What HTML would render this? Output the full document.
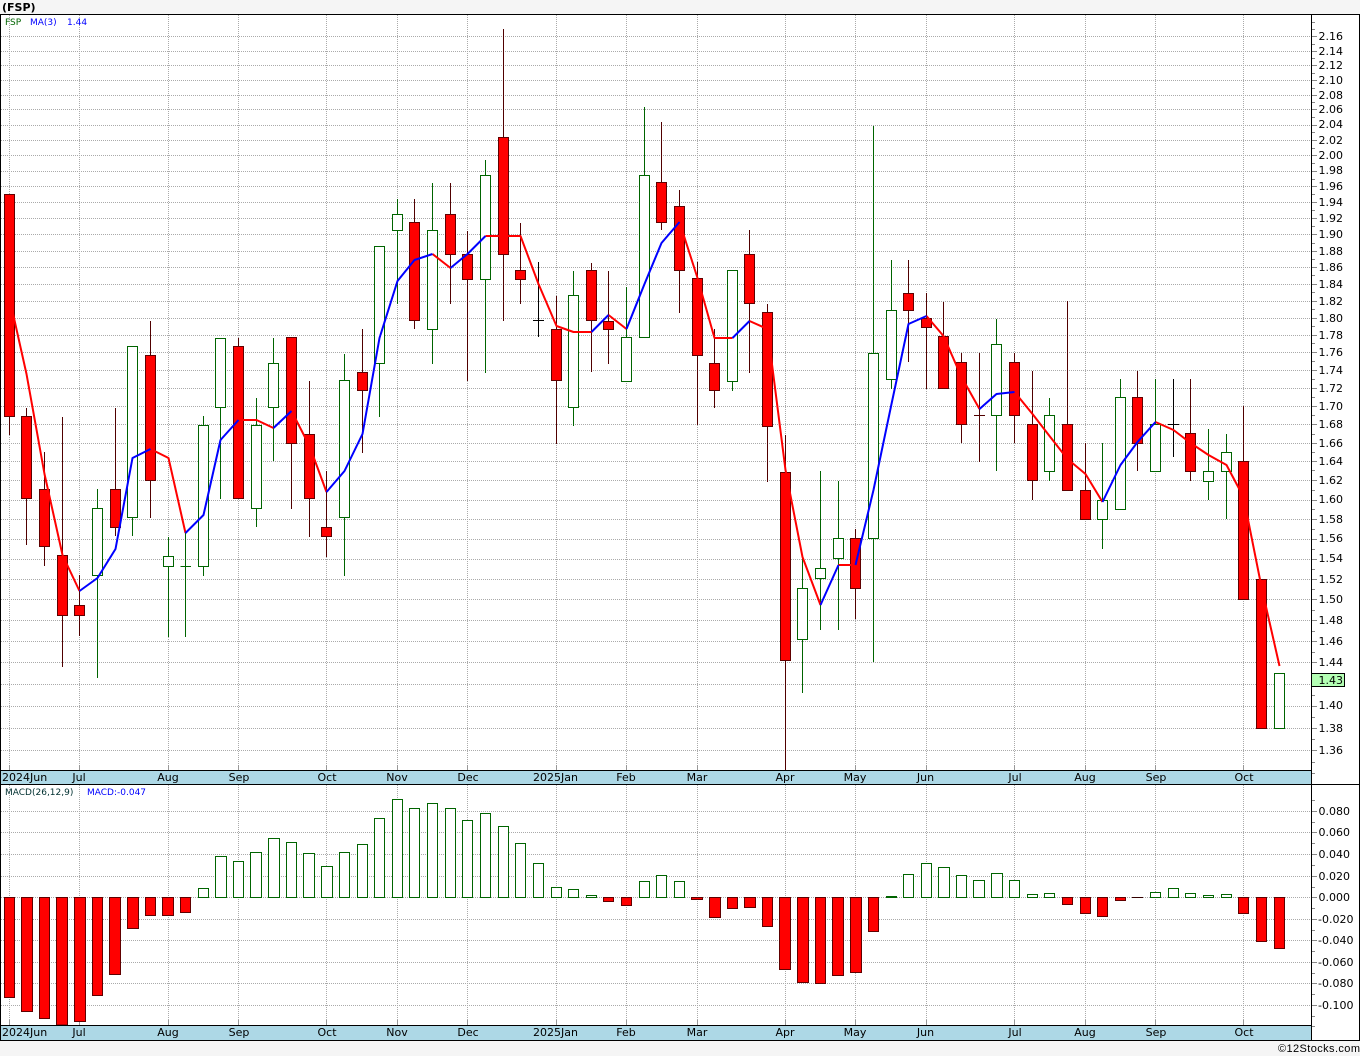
<!DOCTYPE html>
<html lang="en">
<head>
<meta charset="utf-8">
<title>FSP</title>
<style>
html,body{margin:0;padding:0;background:#f5f5f5;width:1360px;height:1056px;overflow:hidden}
svg{display:block}
text{font-family:"DejaVu Sans",sans-serif;font-size:11px;fill:#000}
.s{font-size:9px}
.a text{text-anchor:middle}
</style>
</head>
<body>
<svg xmlns="http://www.w3.org/2000/svg" width="1360" height="1056" viewBox="0 0 1360 1056">
<rect x="0" y="0" width="1360" height="1056" fill="#f5f5f5"/>
<rect x="0" y="14" width="1360" height="1027" fill="#fff"/>
<rect x="0" y="770" width="1311" height="14" fill="#add8e6"/>
<rect x="0" y="1025" width="1311" height="15" fill="#add8e6"/>

<!-- grid -->
<path fill="none" stroke="#aaa" stroke-width="1" stroke-dasharray="1 1" d="M1 36.5H1311M1 51.5H1311M1 65.5H1311M1 80.5H1311M1 95.5H1311M1 109.5H1311M1 125.5H1311M1 140.5H1311M1 155.5H1311M1 171.5H1311M1 186.5H1311M1 202.5H1311M1 218.5H1311M1 234.5H1311M1 251.5H1311M1 267.5H1311M1 284.5H1311M1 301.5H1311M1 318.5H1311M1 335.5H1311M1 352.5H1311M1 370.5H1311M1 388.5H1311M1 406.5H1311M1 424.5H1311M1 443.5H1311M1 461.5H1311M1 480.5H1311M1 500.5H1311M1 519.5H1311M1 539.5H1311M1 559.5H1311M1 579.5H1311M1 599.5H1311M1 620.5H1311M1 641.5H1311M1 662.5H1311M1 684.5H1311M1 706.5H1311M1 728.5H1311M1 750.5H1311
M9.5 15V770M79.5 15V770M168.5 15V770M238.5 15V770M326.5 15V770M397.5 15V770M467.5 15V770M556.5 15V770M626.5 15V770M697.5 15V770M785.5 15V770M855.5 15V770M926.5 15V770M1014.5 15V770M1085.5 15V770M1155.5 15V770M1243.5 15V770
M1 811.5H1311M1 832.5H1311M1 854.5H1311M1 876.5H1311M1 897.5H1311M1 919.5H1311M1 940.5H1311M1 962.5H1311M1 983.5H1311M1 1005.5H1311
M9.5 785V1025M79.5 785V1025M168.5 785V1025M238.5 785V1025M326.5 785V1025M397.5 785V1025M467.5 785V1025M556.5 785V1025M626.5 785V1025M697.5 785V1025M785.5 785V1025M855.5 785V1025M926.5 785V1025M1014.5 785V1025M1085.5 785V1025M1155.5 785V1025M1243.5 785V1025"/>
<path fill="none" stroke="#999" d="M9.5 765V770M79.5 765V770M168.5 765V770M238.5 765V770M326.5 765V770M397.5 765V770M467.5 765V770M556.5 765V770M626.5 765V770M697.5 765V770M785.5 765V770M855.5 765V770M926.5 765V770M1014.5 765V770M1085.5 765V770M1155.5 765V770M1243.5 765V770
M9.5 1020V1025M79.5 1020V1025M168.5 1020V1025M238.5 1020V1025M326.5 1020V1025M397.5 1020V1025M467.5 1020V1025M556.5 1020V1025M626.5 1020V1025M697.5 1020V1025M785.5 1020V1025M855.5 1020V1025M926.5 1020V1025M1014.5 1020V1025M1085.5 1020V1025M1155.5 1020V1025M1243.5 1020V1025"/>

<!-- axis ticks -->
<path fill="none" stroke="#888" d="M1312 36.5h5M1312 51.5h5M1312 65.5h5M1312 80.5h5M1312 95.5h5M1312 109.5h5M1312 125.5h5M1312 140.5h5M1312 155.5h5M1312 171.5h5M1312 186.5h5M1312 202.5h5M1312 218.5h5M1312 234.5h5M1312 251.5h5M1312 267.5h5M1312 284.5h5M1312 301.5h5M1312 318.5h5M1312 335.5h5M1312 352.5h5M1312 370.5h5M1312 388.5h5M1312 406.5h5M1312 424.5h5M1312 443.5h5M1312 461.5h5M1312 480.5h5M1312 500.5h5M1312 519.5h5M1312 539.5h5M1312 559.5h5M1312 579.5h5M1312 599.5h5M1312 620.5h5M1312 641.5h5M1312 662.5h5M1312 684.5h5M1312 706.5h5M1312 728.5h5M1312 750.5h5
M1312 22.5h3M1312 29.5h3M1312 44.5h3M1312 58.5h3M1312 73.5h3M1312 88.5h3M1312 102.5h3M1312 117.5h3M1312 132.5h3M1312 148.5h3M1312 163.5h3M1312 179.5h3M1312 194.5h3M1312 210.5h3M1312 226.5h3M1312 243.5h3M1312 259.5h3M1312 275.5h3M1312 292.5h3M1312 309.5h3M1312 326.5h3M1312 343.5h3M1312 361.5h3M1312 379.5h3M1312 397.5h3M1312 415.5h3M1312 434.5h3M1312 452.5h3M1312 470.5h3M1312 490.5h3M1312 509.5h3M1312 529.5h3M1312 549.5h3M1312 569.5h3M1312 589.5h3M1312 610.5h3M1312 631.5h3M1312 652.5h3M1312 673.5h3M1312 695.5h3M1312 717.5h3M1312 739.5h3M1312 762.5h3M1312 773.5h3
M1312 811.5h5M1312 832.5h5M1312 854.5h5M1312 876.5h5M1312 897.5h5M1312 919.5h5M1312 940.5h5M1312 962.5h5M1312 983.5h5M1312 1005.5h5
M1312 800.5h3M1312 822.5h3M1312 843.5h3M1312 865.5h3M1312 887.5h3M1312 908.5h3M1312 930.5h3M1312 951.5h3M1312 973.5h3M1312 994.5h3M1312 1016.5h3M1312 1026.5h3"/>

<!-- green wicks -->
<path fill="none" stroke="#006400" d="M97.5 489V678M132.5 346V536M168.5 537V637M185.5 533V637M180.5 566.5H191M203.5 416V576M220.5 338V499M256.5 398V527M273.5 338V461M344.5 354V576M379.5 246V417M397.5 199V304M432.5 183V364M485.5 160V373M573.5 271V426M626.5 287V381M644.5 107V337M732.5 270V391M802.5 558V693M820.5 471V630M838.5 481V630M873.5 126V662M891.5 260V389M996.5 319V471M1049.5 398V481M1102.5 443V549M1120.5 379V509M1155.5 379V471M1208.5 429V500M1226.5 434V519M1279.5 673V728"/>
<!-- red wicks -->
<path fill="none" stroke="#500000" d="M9.5 194V435M26.5 408V545M44.5 452V566M62.5 417V667M79.5 575V636M115.5 408V536M150.5 321V518M238.5 338V498M291.5 337V509M309.5 381V537M326.5 471V557M362.5 329V453M414.5 199V329M450.5 183V304M467.5 231V381M503.5 29V321M520.5 223V304M556.5 296V444M591.5 263V372M608.5 271V364M661.5 122V230M679.5 190V313M697.5 262V425M714.5 329V408M749.5 230V373M767.5 304V482M785.5 435V770M855.5 529V619M908.5 260V362M926.5 293V389M943.5 302V389M961.5 353V443M979.5 353V462M974 415.5H985M1014.5 353V443M1032.5 371V500M1067.5 301V490M1085.5 443V519M1137.5 371V471M1190.5 379V481M1243.5 406V599M1261.5 579V728"/>
<!-- black doji -->
<path fill="none" stroke="#000" d="M538.5 262V337M533 320.5H544M1173.5 379V457M1168 424.5H1179"/>

<!-- green bodies -->
<path fill="#fff" stroke="#006400" d="M92.5 508.5h10V575.5h-10zM127.5 346.5h10V517.5h-10zM163.5 556.5h10V566.5h-10zM198.5 425.5h10V566.5h-10zM215.5 338.5h10V407.5h-10zM251.5 425.5h10V508.5h-10zM268.5 363.5h10V407.5h-10zM339.5 380.5h10V517.5h-10zM374.5 246.5h10V363.5h-10zM392.5 214.5h10V230.5h-10zM427.5 230.5h10V329.5h-10zM480.5 175.5h10V279.5h-10zM568.5 295.5h10V407.5h-10zM621.5 337.5h10V381.5h-10zM639.5 175.5h10V337.5h-10zM727.5 270.5h10V381.5h-10zM797.5 588.5h10V639.5h-10zM815.5 568.5h10V578.5h-10zM833.5 538.5h10V558.5h-10zM868.5 353.5h10V538.5h-10zM886.5 310.5h10V379.5h-10zM991.5 344.5h10V415.5h-10zM1044.5 415.5h10V471.5h-10zM1097.5 500.5h10V519.5h-10zM1115.5 397.5h10V509.5h-10zM1150.5 424.5h10V471.5h-10zM1203.5 471.5h10V481.5h-10zM1221.5 452.5h10V471.5h-10zM1274.5 673.5h10V728.5h-10z"/>
<!-- red bodies -->
<path fill="#f00" stroke="#600000" d="M4.5 194.5h10V416.5h-10zM21.5 416.5h10V498.5h-10zM39.5 489.5h10V546.5h-10zM57.5 555.5h10V615.5h-10zM74.5 605.5h10V615.5h-10zM110.5 489.5h10V527.5h-10zM145.5 355.5h10V480.5h-10zM233.5 346.5h10V498.5h-10zM286.5 337.5h10V443.5h-10zM304.5 434.5h10V498.5h-10zM321.5 527.5h10V536.5h-10zM357.5 372.5h10V390.5h-10zM409.5 222.5h10V320.5h-10zM445.5 214.5h10V254.5h-10zM462.5 254.5h10V279.5h-10zM498.5 137.5h10V254.5h-10zM515.5 270.5h10V279.5h-10zM551.5 329.5h10V380.5h-10zM586.5 270.5h10V320.5h-10zM603.5 321.5h10V329.5h-10zM656.5 182.5h10V222.5h-10zM674.5 206.5h10V270.5h-10zM692.5 278.5h10V355.5h-10zM709.5 363.5h10V390.5h-10zM744.5 254.5h10V303.5h-10zM762.5 312.5h10V426.5h-10zM780.5 472.5h10V660.5h-10zM850.5 538.5h10V588.5h-10zM903.5 293.5h10V310.5h-10zM921.5 318.5h10V327.5h-10zM938.5 336.5h10V388.5h-10zM956.5 362.5h10V424.5h-10zM1009.5 362.5h10V415.5h-10zM1027.5 424.5h10V480.5h-10zM1062.5 424.5h10V490.5h-10zM1080.5 490.5h10V519.5h-10zM1132.5 397.5h10V443.5h-10zM1185.5 433.5h10V471.5h-10zM1238.5 461.5h10V599.5h-10zM1256.5 579.5h10V728.5h-10z"/>

<!-- moving average -->
<path fill="none" stroke="#f00" stroke-width="2" stroke-linejoin="round" d="M9.5 298L26.5 374 44.5 474 62.5 555 79.5 591M150.5 449L168.5 458 185.5 533M238.5 420L256.5 420 273.5 428M291.5 411L309.5 446 326.5 492M432.5 254L450.5 268M485.5 236L503.5 236 520.5 236 538.5 284 556.5 326 573.5 332 591.5 332M608.5 315L626.5 329M679.5 222L697.5 278 714.5 338 732.5 338M749.5 321L767.5 329 785.5 470 802.5 557 820.5 605M838.5 565L855.5 565M926.5 316L943.5 336 961.5 377 979.5 409M1014.5 392L1032.5 414 1049.5 436 1067.5 459 1085.5 474 1102.5 502M1155.5 422L1173.5 430 1190.5 443 1208.5 455 1226.5 465 1243.5 497 1261.5 587 1279.5 666"/>
<path fill="none" stroke="#00f" stroke-width="2" stroke-linejoin="round" d="M79.5 591L97.5 578 115.5 549 132.5 458 150.5 449M185.5 533L203.5 515 220.5 440 238.5 420M273.5 428L291.5 411M326.5 492L344.5 471 362.5 434 379.5 338 397.5 281 414.5 260 432.5 254M450.5 268L467.5 254 485.5 236M591.5 332L608.5 315M626.5 329L644.5 284 661.5 243 679.5 222M732.5 338L749.5 321M820.5 605L838.5 565M855.5 565L873.5 490 891.5 404 908.5 324 926.5 316M979.5 409L996.5 394 1014.5 392M1102.5 502L1120.5 465 1137.5 442 1155.5 422"/>

<!-- MACD bars -->
<path fill="#fff" stroke="#006400" d="M198.5 888.5h10V897.5h-10zM215.5 856.5h11V897.5h-11zM233.5 861.5h10V897.5h-10zM250.5 852.5h11V897.5h-11zM268.5 838.5h11V897.5h-11zM286.5 842.5h10V897.5h-10zM303.5 853.5h11V897.5h-11zM321.5 866.5h11V897.5h-11zM339.5 852.5h10V897.5h-10zM357.5 844.5h10V897.5h-10zM374.5 818.5h10V897.5h-10zM392.5 799.5h10V897.5h-10zM409.5 808.5h10V897.5h-10zM427.5 803.5h10V897.5h-10zM445.5 808.5h10V897.5h-10zM462.5 820.5h10V897.5h-10zM480.5 813.5h10V897.5h-10zM498.5 826.5h10V897.5h-10zM515.5 843.5h10V897.5h-10zM533.5 863.5h10V897.5h-10zM551.5 887.5h10V897.5h-10zM568.5 889.5h10V897.5h-10zM586.5 895.5h10V897.5h-10zM639.5 881.5h10V897.5h-10zM656.5 875.5h10V897.5h-10zM674.5 881.5h10V897.5h-10zM886.5 896.5h10V897.5h-10zM903.5 874.5h10V897.5h-10zM921.5 863.5h10V897.5h-10zM938.5 867.5h11V897.5h-11zM956.5 875.5h10V897.5h-10zM973.5 880.5h11V897.5h-11zM991.5 873.5h11V897.5h-11zM1009.5 880.5h10V897.5h-10zM1027.5 894.5h10V897.5h-10zM1044.5 893.5h10V897.5h-10zM1150.5 892.5h10V897.5h-10zM1168.5 888.5h10V897.5h-10zM1185.5 893.5h10V897.5h-10zM1203.5 895.5h10V897.5h-10zM1221.5 894.5h10V897.5h-10z"/>
<path fill="#f00" stroke="#600000" d="M4.5 897.5h10V997.5h-10zM21.5 897.5h11V1011.5h-11zM39.5 897.5h10V1018.5h-10zM56.5 897.5h11V1025h-11zM74.5 897.5h11V1021.5h-11zM92.5 897.5h10V995.5h-10zM109.5 897.5h11V974.5h-11zM127.5 897.5h11V928.5h-11zM145.5 897.5h10V915.5h-10zM162.5 897.5h11V915.5h-11zM180.5 897.5h10V912.5h-10zM603.5 897.5h10V901.5h-10zM621.5 897.5h10V905.5h-10zM691.5 897.5h11V899.5h-11zM709.5 897.5h11V917.5h-11zM727.5 897.5h10V908.5h-10zM744.5 897.5h11V907.5h-11zM762.5 897.5h10V926.5h-10zM779.5 897.5h11V969.5h-11zM797.5 897.5h11V982.5h-11zM815.5 897.5h10V983.5h-10zM832.5 897.5h11V975.5h-11zM850.5 897.5h11V972.5h-11zM868.5 897.5h10V931.5h-10zM1062.5 897.5h10V904.5h-10zM1080.5 897.5h10V913.5h-10zM1097.5 897.5h10V916.5h-10zM1115.5 897.5h10V900.5h-10zM1238.5 897.5h10V913.5h-10zM1256.5 897.5h10V941.5h-10zM1274.5 897.5h10V948.5h-10z"/>
<path fill="none" stroke="#300" d="M1132 897.5h11"/>

<!-- frame -->
<path fill="none" stroke="#000" d="M0 14.5H1360M0.5 14V1040M0 770.5H1311.5M0 784.5H1360M0 1025.5H1311.5M0 1040.5H1360M1311.5 14V1041M1359.5 14V1041"/>

<!-- title and legends -->
<text x="2" y="11" style="font-weight:bold">(FSP)</text>
<text class="s" x="5" y="25" style="fill:#006400">FSP</text>
<text class="s" x="30" y="25" style="fill:#00f">MA(3)</text>
<text class="s" x="67" y="25" style="fill:#00f">1.44</text>
<text class="s" x="5" y="795" style="fill:#003030">MACD(26,12,9)</text>
<text class="s" x="87" y="795" style="fill:#00f">MACD:-0.047</text>

<!-- price labels -->
<g>
<text x="1318.5" y="40">2.16</text><text x="1318.5" y="55">2.14</text><text x="1318.5" y="69">2.12</text><text x="1318.5" y="84">2.10</text><text x="1318.5" y="99">2.08</text><text x="1318.5" y="113">2.06</text><text x="1318.5" y="128">2.04</text><text x="1318.5" y="144">2.02</text><text x="1318.5" y="159">2.00</text><text x="1318.5" y="174">1.98</text><text x="1318.5" y="190">1.96</text><text x="1318.5" y="206">1.94</text><text x="1318.5" y="222">1.92</text><text x="1318.5" y="238">1.90</text><text x="1318.5" y="255">1.88</text><text x="1318.5" y="271">1.86</text><text x="1318.5" y="288">1.84</text><text x="1318.5" y="305">1.82</text><text x="1318.5" y="322">1.80</text><text x="1318.5" y="339">1.78</text><text x="1318.5" y="356">1.76</text><text x="1318.5" y="374">1.74</text><text x="1318.5" y="392">1.72</text><text x="1318.5" y="410">1.70</text><text x="1318.5" y="428">1.68</text><text x="1318.5" y="447">1.66</text><text x="1318.5" y="465">1.64</text><text x="1318.5" y="484">1.62</text><text x="1318.5" y="503">1.60</text><text x="1318.5" y="523">1.58</text><text x="1318.5" y="542">1.56</text><text x="1318.5" y="562">1.54</text><text x="1318.5" y="583">1.52</text><text x="1318.5" y="603">1.50</text><text x="1318.5" y="624">1.48</text><text x="1318.5" y="645">1.46</text><text x="1318.5" y="666">1.44</text><text x="1318.5" y="709">1.40</text><text x="1318.5" y="732">1.38</text><text x="1318.5" y="754">1.36</text>
</g>
<rect x="1311.5" y="673.5" width="33" height="13" fill="#b4ffb4" stroke="#000"/>
<text x="1318.5" y="684">1.43</text>

<!-- MACD labels -->
<g>
<text x="1318.5" y="815">0.080</text><text x="1318.5" y="836">0.060</text><text x="1318.5" y="858">0.040</text><text x="1318.5" y="880">0.020</text><text x="1318.5" y="901">0.000</text><text x="1318" y="923">-0.020</text><text x="1318" y="944">-0.040</text><text x="1318" y="966">-0.060</text><text x="1318" y="987">-0.080</text><text x="1318" y="1009">-0.100</text>
</g>

<!-- date labels -->
<text x="2" y="781">2024Jun</text>
<g class="a">
<text x="79" y="781">Jul</text><text x="168" y="781">Aug</text><text x="239" y="781">Sep</text><text x="327" y="781">Oct</text><text x="397" y="781">Nov</text><text x="468" y="781">Dec</text><text x="555.5" y="781">2025Jan</text><text x="626" y="781">Feb</text><text x="697" y="781">Mar</text><text x="785" y="781">Apr</text><text x="855" y="781">May</text><text x="925.5" y="781">Jun</text><text x="1015" y="781">Jul</text><text x="1085" y="781">Aug</text><text x="1156" y="781">Sep</text><text x="1244" y="781">Oct</text>
</g>
<text x="2" y="1036">2024Jun</text>
<g class="a">
<text x="79" y="1036">Jul</text><text x="168" y="1036">Aug</text><text x="239" y="1036">Sep</text><text x="327" y="1036">Oct</text><text x="397" y="1036">Nov</text><text x="468" y="1036">Dec</text><text x="555.5" y="1036">2025Jan</text><text x="626" y="1036">Feb</text><text x="697" y="1036">Mar</text><text x="785" y="1036">Apr</text><text x="855" y="1036">May</text><text x="925.5" y="1036">Jun</text><text x="1015" y="1036">Jul</text><text x="1085" y="1036">Aug</text><text x="1156" y="1036">Sep</text><text x="1244" y="1036">Oct</text>
</g>

<!-- footer -->
<text x="1278" y="1052" style="font-family:'Liberation Sans',sans-serif;letter-spacing:.4px">©12Stocks.com</text>
</svg>
</body>
</html>
